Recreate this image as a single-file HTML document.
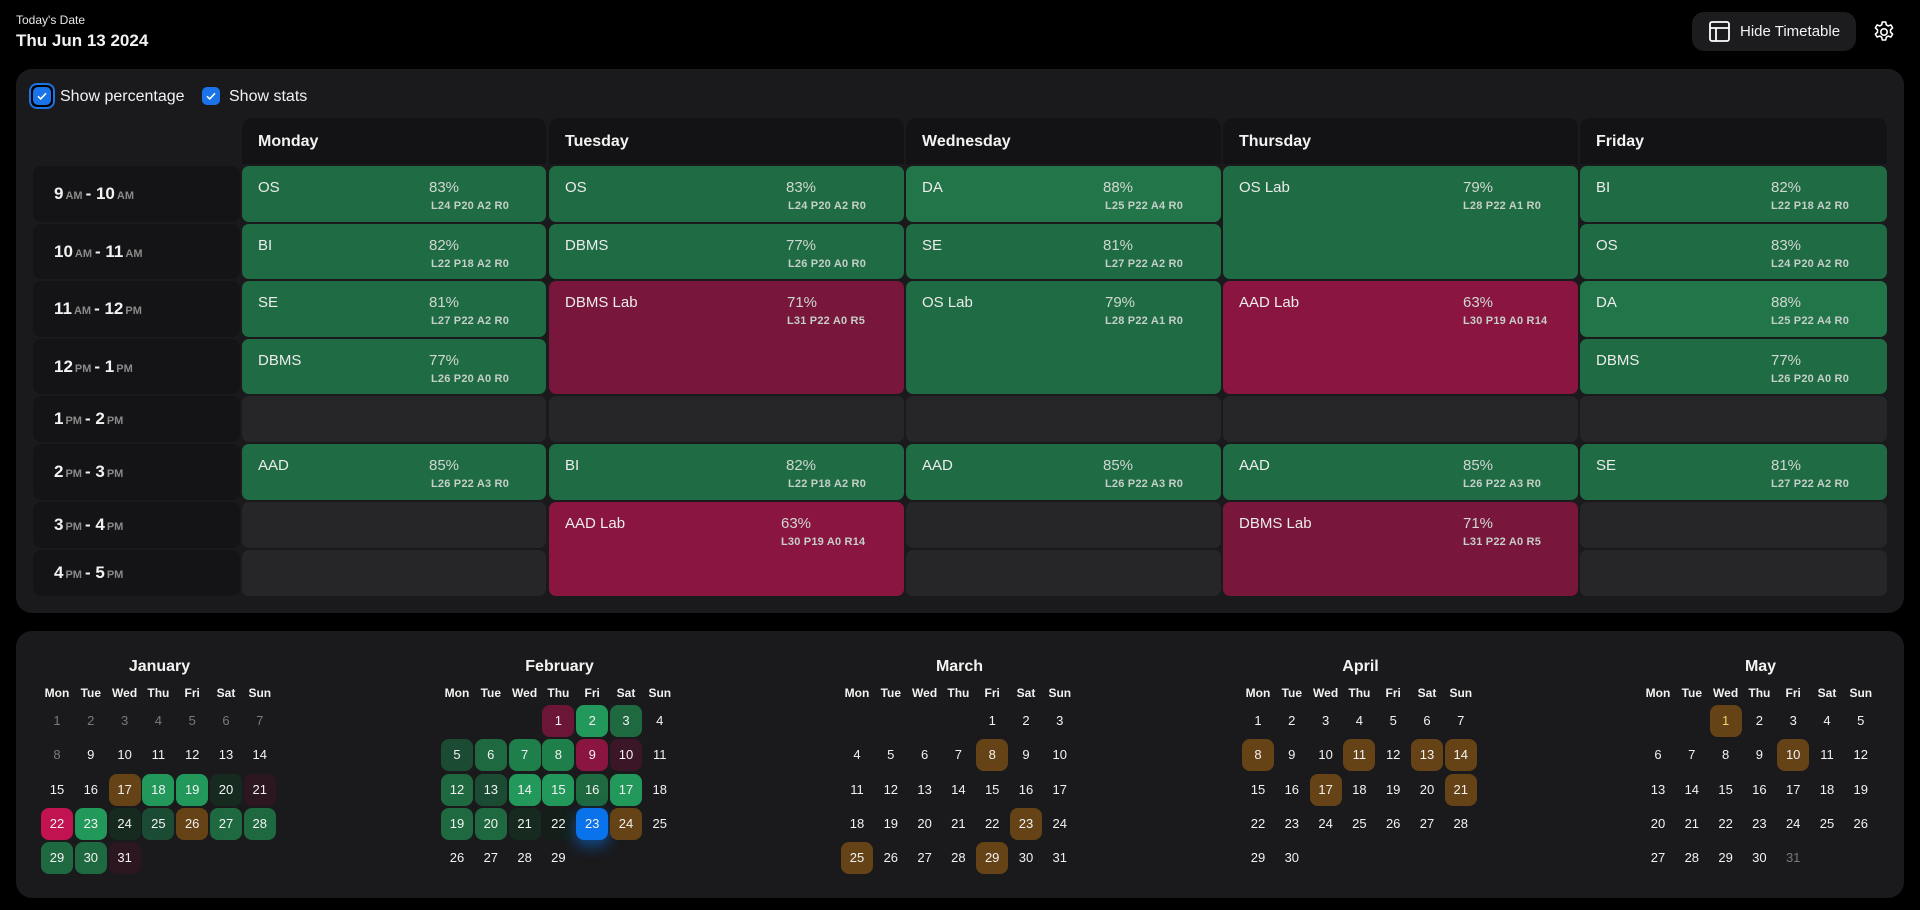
<!DOCTYPE html>
<html><head><meta charset="utf-8"><style>
*{box-sizing:border-box;margin:0;padding:0}
body{width:1920px;height:910px;background:#000;font-family:"Liberation Sans",Arial,sans-serif;color:#f2f2f2;position:relative;overflow:hidden}
.abs{position:absolute}
.panel{position:absolute;left:16px;width:1888px;background:#1a1a1c;border-radius:16px}
.hd{position:absolute;top:118px;height:46px;background:#131315;border-radius:10px 10px 0 0;font-weight:bold;font-size:16px;padding:15px 0 0 16px}
.tm{position:absolute;left:33px;width:207px;background:#141416;border-radius:8px;font-weight:bold;font-size:17px;padding-left:21px;display:flex;align-items:center}
.tm small{font-size:11px;color:#8a8a8a;margin:0 3px 0 2px;position:relative;top:2px}
.c{position:absolute;border-radius:7px;background:#262628}
.c .n{position:absolute;left:16px;top:13px;font-size:15px;color:#ececec}
.c .p{position:absolute;top:13px;font-size:15px;color:#cfd8d2}
.c .s{position:absolute;top:34px;font-size:11px;color:#c5cfc9;font-weight:bold;letter-spacing:.2px}
.g{background:#1f6b43}.g2{background:#217548}.r{background:#78163b}.r2{background:#8a1540}
.mon{position:absolute;top:653px;width:237px;text-align:center}
.mon h3{font-size:16px;font-weight:bold;height:28px;line-height:28px}
.dw{display:grid;grid-template-columns:repeat(7,32px);column-gap:1.8px;font-size:12px;font-weight:bold;height:24px;line-height:24px}
.dd{display:grid;grid-template-columns:repeat(7,32px);column-gap:1.8px;row-gap:2.3px;grid-auto-rows:32px;font-size:13px}
.dd div{border-radius:8px;line-height:32px}
.dim{color:#7a7a7a}
.G1{background:#22995b}.G2{background:#1f7f4a}.G3{background:#1e6940}.G4{background:#1b4c33}.G5{background:#162a20}.G6{background:#141f1a}
.R1{background:#c01350}.R2{background:#8a1540}.R3{background:#6b1636}.R4{background:#2c1620}.R5{background:#3a1626}
.B{background:#654317}.BL{background:#0a72ea;box-shadow:0 6px 14px rgba(10,114,234,.55)}
</style></head><body>
<div class="abs" style="left:16px;top:13px;font-size:12px;color:#e8e8e8">Today's Date</div>
<div class="abs" style="left:16px;top:31px;font-size:17px;font-weight:bold">Thu Jun 13 2024</div>
<div class="abs" style="left:1692px;top:12px;width:164px;height:39px;background:#1c1c1e;border-radius:12px">
<svg class="abs" style="left:17px;top:9px" width="21" height="21" viewBox="0 0 21 21" fill="none" stroke="#fff" stroke-width="1.8"><rect x="1" y="1" width="19" height="19" rx="2"/><path d="M1 7h19M7 7v13"/></svg>
<div class="abs" style="left:48px;top:11px;font-size:15px">Hide Timetable</div></div>
<svg class="abs" style="left:1872px;top:20px" width="24" height="24" viewBox="0 0 24 24" fill="none" stroke="#fff" stroke-width="1.6" stroke-linejoin="round"><path d="M10.3 2h3.4l.6 2.8 1.9 1.1 2.7-.9 1.7 2.9-2.1 1.9v2.4l2.1 1.9-1.7 2.9-2.7-.9-1.9 1.1-.6 2.8h-3.4l-.6-2.8-1.9-1.1-2.7.9-1.7-2.9 2.1-1.9v-2.4L3.4 7.9l1.7-2.9 2.7.9 1.9-1.1z"/><circle cx="12" cy="12" r="3.2"/></svg>

<div class="panel" style="top:69px;height:544px"></div>
<div class="abs" style="left:29px;top:83px;width:26px;height:26px;border:2px solid #1a73e8;border-radius:8px;background:#000"></div>
<div class="abs" style="left:33px;top:87px;width:18px;height:18px;background:#1a73e8;border-radius:5px"><svg width="18" height="18" viewBox="0 0 18 18" fill="none" stroke="#fff" stroke-width="1.5"><path d="M5 9.3l2.7 2.6L13 6.3"/></svg></div>
<div class="abs" style="left:60px;top:88px;font-size:16px">Show percentage</div>
<div class="abs" style="left:202px;top:87px;width:18px;height:18px;background:#1a73e8;border-radius:5px"><svg width="18" height="18" viewBox="0 0 18 18" fill="none" stroke="#fff" stroke-width="1.5"><path d="M5 9.3l2.7 2.6L13 6.3"/></svg></div>
<div class="abs" style="left:229px;top:88px;font-size:16px">Show stats</div>

<div class="hd" style="left:242px;width:304px">Monday</div>
<div class="hd" style="left:549px;width:355px">Tuesday</div>
<div class="hd" style="left:906px;width:315px">Wednesday</div>
<div class="hd" style="left:1223px;width:355px">Thursday</div>
<div class="hd" style="left:1580px;width:307px">Friday</div>

<div class="tm" style="top:166px;height:56px">9<small>AM</small>- 10<small>AM</small></div>
<div class="tm" style="top:224px;height:55px">10<small>AM</small>- 11<small>AM</small></div>
<div class="tm" style="top:281px;height:56px">11<small>AM</small>- 12<small>PM</small></div>
<div class="tm" style="top:339px;height:55px">12<small>PM</small>- 1<small>PM</small></div>
<div class="tm" style="top:396px;height:46px">1<small>PM</small>- 2<small>PM</small></div>
<div class="tm" style="top:444px;height:56px">2<small>PM</small>- 3<small>PM</small></div>
<div class="tm" style="top:502px;height:46px">3<small>PM</small>- 4<small>PM</small></div>
<div class="tm" style="top:550px;height:46px">4<small>PM</small>- 5<small>PM</small></div>

<!-- Monday -->
<div class="c g" style="left:242px;width:304px;top:166px;height:56px"><span class="n">OS</span><span class="p" style="left:187px">83%</span><span class="s" style="left:189px">L24 P20 A2 R0</span></div>
<div class="c g" style="left:242px;width:304px;top:224px;height:55px"><span class="n">BI</span><span class="p" style="left:187px">82%</span><span class="s" style="left:189px">L22 P18 A2 R0</span></div>
<div class="c g" style="left:242px;width:304px;top:281px;height:56px"><span class="n">SE</span><span class="p" style="left:187px">81%</span><span class="s" style="left:189px">L27 P22 A2 R0</span></div>
<div class="c g" style="left:242px;width:304px;top:339px;height:55px"><span class="n">DBMS</span><span class="p" style="left:187px">77%</span><span class="s" style="left:189px">L26 P20 A0 R0</span></div>
<div class="c" style="left:242px;width:304px;top:396px;height:46px"></div>
<div class="c g" style="left:242px;width:304px;top:444px;height:56px"><span class="n">AAD</span><span class="p" style="left:187px">85%</span><span class="s" style="left:189px">L26 P22 A3 R0</span></div>
<div class="c" style="left:242px;width:304px;top:502px;height:46px"></div>
<div class="c" style="left:242px;width:304px;top:550px;height:46px"></div>
<!-- Tuesday -->
<div class="c g" style="left:549px;width:355px;top:166px;height:56px"><span class="n">OS</span><span class="p" style="left:237px">83%</span><span class="s" style="left:239px">L24 P20 A2 R0</span></div>
<div class="c g" style="left:549px;width:355px;top:224px;height:55px"><span class="n">DBMS</span><span class="p" style="left:237px">77%</span><span class="s" style="left:239px">L26 P20 A0 R0</span></div>
<div class="c r" style="left:549px;width:355px;top:281px;height:113px"><span class="n">DBMS Lab</span><span class="p" style="left:238px">71%</span><span class="s" style="left:238px">L31 P22 A0 R5</span></div>
<div class="c" style="left:549px;width:355px;top:396px;height:46px"></div>
<div class="c g" style="left:549px;width:355px;top:444px;height:56px"><span class="n">BI</span><span class="p" style="left:237px">82%</span><span class="s" style="left:239px">L22 P18 A2 R0</span></div>
<div class="c r2" style="left:549px;width:355px;top:502px;height:94px"><span class="n">AAD Lab</span><span class="p" style="left:232px">63%</span><span class="s" style="left:232px">L30 P19 A0 R14</span></div>
<!-- Wednesday -->
<div class="c g2" style="left:906px;width:315px;top:166px;height:56px"><span class="n">DA</span><span class="p" style="left:197px">88%</span><span class="s" style="left:199px">L25 P22 A4 R0</span></div>
<div class="c g" style="left:906px;width:315px;top:224px;height:55px"><span class="n">SE</span><span class="p" style="left:197px">81%</span><span class="s" style="left:199px">L27 P22 A2 R0</span></div>
<div class="c g" style="left:906px;width:315px;top:281px;height:113px"><span class="n">OS Lab</span><span class="p" style="left:199px">79%</span><span class="s" style="left:199px">L28 P22 A1 R0</span></div>
<div class="c" style="left:906px;width:315px;top:396px;height:46px"></div>
<div class="c g" style="left:906px;width:315px;top:444px;height:56px"><span class="n">AAD</span><span class="p" style="left:197px">85%</span><span class="s" style="left:199px">L26 P22 A3 R0</span></div>
<div class="c" style="left:906px;width:315px;top:502px;height:46px"></div>
<div class="c" style="left:906px;width:315px;top:550px;height:46px"></div>
<!-- Thursday -->
<div class="c g" style="left:1223px;width:355px;top:166px;height:113px"><span class="n">OS Lab</span><span class="p" style="left:240px">79%</span><span class="s" style="left:240px">L28 P22 A1 R0</span></div>
<div class="c r2" style="left:1223px;width:355px;top:281px;height:113px"><span class="n">AAD Lab</span><span class="p" style="left:240px">63%</span><span class="s" style="left:240px">L30 P19 A0 R14</span></div>
<div class="c" style="left:1223px;width:355px;top:396px;height:46px"></div>
<div class="c g" style="left:1223px;width:355px;top:444px;height:56px"><span class="n">AAD</span><span class="p" style="left:240px">85%</span><span class="s" style="left:240px">L26 P22 A3 R0</span></div>
<div class="c r" style="left:1223px;width:355px;top:502px;height:94px"><span class="n">DBMS Lab</span><span class="p" style="left:240px">71%</span><span class="s" style="left:240px">L31 P22 A0 R5</span></div>
<!-- Friday -->
<div class="c g" style="left:1580px;width:307px;top:166px;height:56px"><span class="n">BI</span><span class="p" style="left:191px">82%</span><span class="s" style="left:191px">L22 P18 A2 R0</span></div>
<div class="c g" style="left:1580px;width:307px;top:224px;height:55px"><span class="n">OS</span><span class="p" style="left:191px">83%</span><span class="s" style="left:191px">L24 P20 A2 R0</span></div>
<div class="c g2" style="left:1580px;width:307px;top:281px;height:56px"><span class="n">DA</span><span class="p" style="left:191px">88%</span><span class="s" style="left:191px">L25 P22 A4 R0</span></div>
<div class="c g" style="left:1580px;width:307px;top:339px;height:55px"><span class="n">DBMS</span><span class="p" style="left:191px">77%</span><span class="s" style="left:191px">L26 P20 A0 R0</span></div>
<div class="c" style="left:1580px;width:307px;top:396px;height:46px"></div>
<div class="c g" style="left:1580px;width:307px;top:444px;height:56px"><span class="n">SE</span><span class="p" style="left:191px">81%</span><span class="s" style="left:191px">L27 P22 A2 R0</span></div>
<div class="c" style="left:1580px;width:307px;top:502px;height:46px"></div>
<div class="c" style="left:1580px;width:307px;top:550px;height:46px"></div>

<div class="panel" style="top:631px;height:267px"></div>

<div class="mon" style="left:41px"><h3>January</h3>
<div class="dw"><span>Mon</span><span>Tue</span><span>Wed</span><span>Thu</span><span>Fri</span><span>Sat</span><span>Sun</span></div>
<div class="dd"><div class="dim">1</div><div class="dim">2</div><div class="dim">3</div><div class="dim">4</div><div class="dim">5</div><div class="dim">6</div><div class="dim">7</div>
<div class="dim">8</div><div>9</div><div>10</div><div>11</div><div>12</div><div>13</div><div>14</div>
<div>15</div><div>16</div><div class="B">17</div><div class="G1">18</div><div class="G1">19</div><div class="G5">20</div><div class="R4">21</div>
<div class="R1">22</div><div class="G1">23</div><div class="G5">24</div><div class="G4">25</div><div class="B">26</div><div class="G3">27</div><div class="G3">28</div>
<div class="G3">29</div><div class="G3">30</div><div class="R4">31</div></div></div>

<div class="mon" style="left:441px"><h3>February</h3>
<div class="dw"><span>Mon</span><span>Tue</span><span>Wed</span><span>Thu</span><span>Fri</span><span>Sat</span><span>Sun</span></div>
<div class="dd"><div class="R3" style="grid-column-start:4">1</div><div class="G1">2</div><div class="G3">3</div><div>4</div>
<div class="G4">5</div><div class="G3">6</div><div class="G2">7</div><div class="G2">8</div><div class="R2">9</div><div class="R5">10</div><div>11</div>
<div class="G3">12</div><div class="G4">13</div><div class="G1">14</div><div class="G1">15</div><div class="G3">16</div><div class="G1">17</div><div>18</div>
<div class="G3">19</div><div class="G3">20</div><div class="G5">21</div><div class="G6">22</div><div class="BL">23</div><div class="B">24</div><div>25</div>
<div>26</div><div>27</div><div>28</div><div>29</div></div></div>

<div class="mon" style="left:841px"><h3>March</h3>
<div class="dw"><span>Mon</span><span>Tue</span><span>Wed</span><span>Thu</span><span>Fri</span><span>Sat</span><span>Sun</span></div>
<div class="dd"><div style="grid-column-start:5">1</div><div>2</div><div>3</div>
<div>4</div><div>5</div><div>6</div><div>7</div><div class="B">8</div><div>9</div><div>10</div>
<div>11</div><div>12</div><div>13</div><div>14</div><div>15</div><div>16</div><div>17</div>
<div>18</div><div>19</div><div>20</div><div>21</div><div>22</div><div class="B">23</div><div>24</div>
<div class="B">25</div><div>26</div><div>27</div><div>28</div><div class="B">29</div><div>30</div><div>31</div></div></div>

<div class="mon" style="left:1242px"><h3>April</h3>
<div class="dw"><span>Mon</span><span>Tue</span><span>Wed</span><span>Thu</span><span>Fri</span><span>Sat</span><span>Sun</span></div>
<div class="dd"><div>1</div><div>2</div><div>3</div><div>4</div><div>5</div><div>6</div><div>7</div>
<div class="B">8</div><div>9</div><div>10</div><div class="B">11</div><div>12</div><div class="B">13</div><div class="B">14</div>
<div>15</div><div>16</div><div class="B">17</div><div>18</div><div>19</div><div>20</div><div class="B">21</div>
<div>22</div><div>23</div><div>24</div><div>25</div><div>26</div><div>27</div><div>28</div>
<div>29</div><div>30</div></div></div>

<div class="mon" style="left:1642px"><h3>May</h3>
<div class="dw"><span>Mon</span><span>Tue</span><span>Wed</span><span>Thu</span><span>Fri</span><span>Sat</span><span>Sun</span></div>
<div class="dd"><div class="B" style="grid-column-start:3;color:#f5d36a">1</div><div>2</div><div>3</div><div>4</div><div>5</div>
<div>6</div><div>7</div><div>8</div><div>9</div><div class="B">10</div><div>11</div><div>12</div>
<div>13</div><div>14</div><div>15</div><div>16</div><div>17</div><div>18</div><div>19</div>
<div>20</div><div>21</div><div>22</div><div>23</div><div>24</div><div>25</div><div>26</div>
<div>27</div><div>28</div><div>29</div><div>30</div><div class="dim">31</div></div></div>
</body></html>
